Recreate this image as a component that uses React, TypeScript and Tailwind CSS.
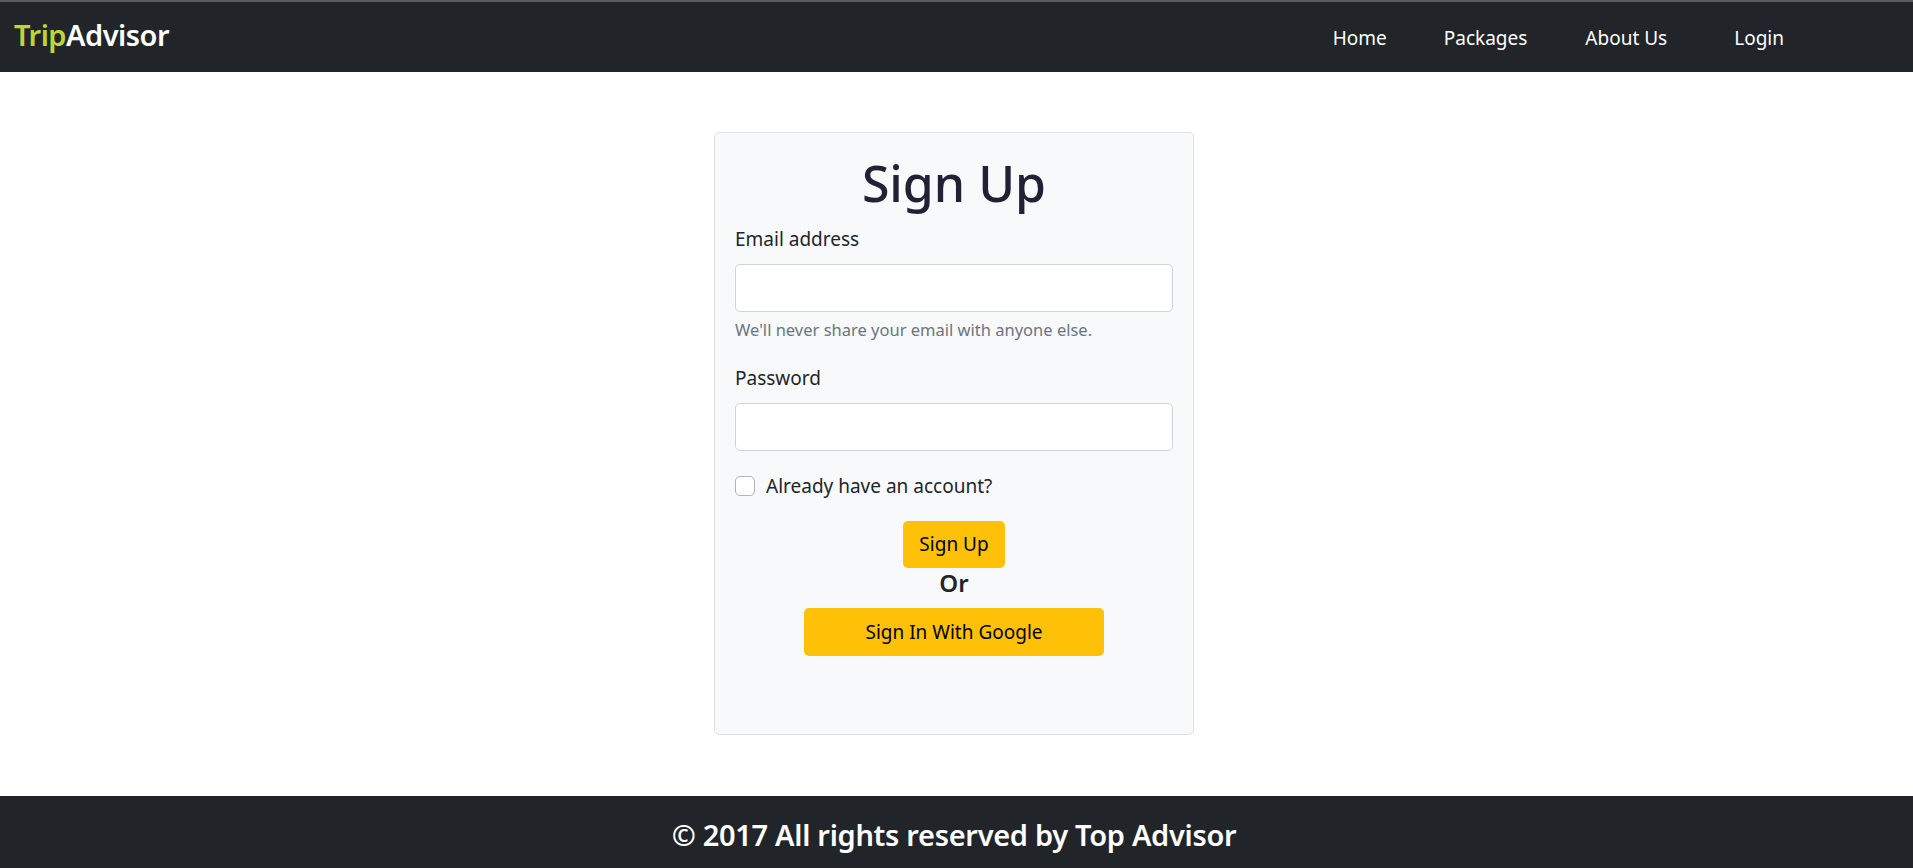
import React from "react";

export default function App() {
  const font = { fontFamily: '"Noto Sans", "Open Sans", sans-serif' };
  return (
    <div className="min-h-screen bg-white text-[#212529]" style={font}>
      <div className="h-[2px] bg-[#5a5a5a]" />
      <nav className="h-[70px] bg-[#212529] flex items-center">
        <div className="pl-[14px] pb-[5px] text-[29px] font-semibold leading-none tracking-[-0.5px]">
          <span className="text-[#bfd43a]">Trip</span>
          <span className="text-white">Advisor</span>
        </div>
        <div className="ml-auto mr-[129px] flex items-center text-[19px] text-white pt-[3px]">
          <a className="mr-[57px]">Home</a>
          <a className="mr-[58px]">Packages</a>
          <a className="mr-[67px]">About Us</a>
          <a>Login</a>
        </div>
      </nav>

      <main className="flex justify-center pt-[60px] pb-[61px] pr-[5px]">
        <div className="w-[480px] h-[603px] bg-[#f8f9fa] border border-[#dee2e6] rounded-[5px] p-[20px]">
          <h1 className="text-center text-[50px] leading-[60px] font-medium text-[#1f2235] mb-[10px]">
            Sign Up
          </h1>
          <label className="block text-[19px] leading-[30px] mb-[10px] pt-[1px]">Email address</label>
          <div className="h-[48px] bg-white border border-[#ced4da] rounded-[5px]" />
          <div className="mt-[5px] text-[16.5px] leading-[26px] text-[#6c757d]">
            We'll never share your email with anyone else.
          </div>
          <label className="block mt-[20px] text-[19px] leading-[30px] mb-[10px]">Password</label>
          <div className="h-[48px] bg-white border border-[#ced4da] rounded-[5px]" />
          <div className="mt-[20px] h-[30px] flex items-center">
            <span className="w-[20px] h-[20px] bg-white border border-[#adb5bd] rounded-[5px] mr-[11px]" />
            <span className="text-[19px] leading-[30px]">Already have an account?</span>
          </div>
          <div className="mt-[20px] flex flex-col items-center">
            <button className="w-[102px] h-[47px] bg-[#ffc107] rounded-[5px] text-[19px] text-black">
              Sign Up
            </button>
            <div className="h-[40px] text-[24px] leading-[30px] font-semibold">Or</div>
            <button className="w-[300px] h-[48px] bg-[#ffc107] rounded-[5px] text-[19px] text-black">
              Sign In With Google
            </button>
          </div>
        </div>
      </main>

      <footer className="bg-[#212529] pt-[18px] pb-[20px] pr-[5px] text-center">
        <div className="text-white text-[29px] leading-[42px] font-semibold tracking-[-0.3px]">
          © 2017 All rights reserved by Top Advisor
        </div>
      </footer>
    </div>
  );
}
